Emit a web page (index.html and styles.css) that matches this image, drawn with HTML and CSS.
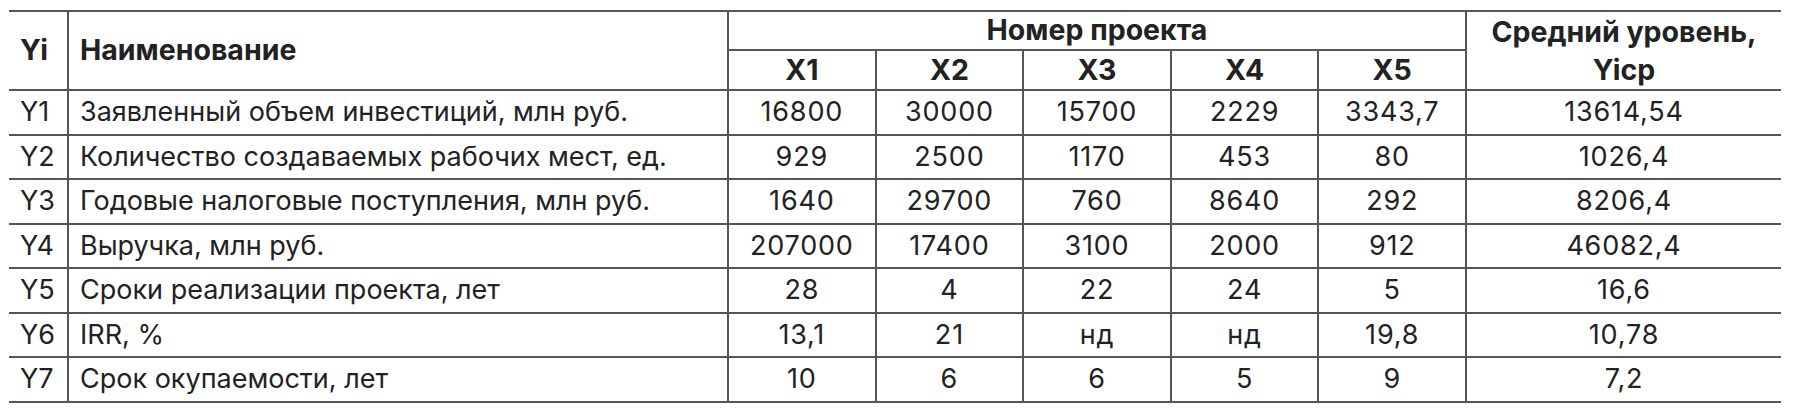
FILE: index.html
```html
<!DOCTYPE html>
<html lang="ru">
<head>
<meta charset="utf-8">
<link rel="stylesheet" href="styles.css">
</head>
<body>
<table class="tbl">
  <colgroup>
    <col class="c-yi">
    <col class="c-name">
    <col class="c-x">
    <col class="c-x">
    <col class="c-x">
    <col class="c-x">
    <col class="c-x">
    <col class="c-avg">
  </colgroup>
  <thead>
    <tr class="h1">
      <th rowspan="2" class="yi first">Yi</th>
      <th rowspan="2" class="name">Наименование</th>
      <th colspan="5" class="num">Номер проекта</th>
      <th rowspan="2" class="num last avg">Средний уровень,<br>Yicp</th>
    </tr>
    <tr class="h2">
      <th class="num">X1</th>
      <th class="num">X2</th>
      <th class="num">X3</th>
      <th class="num">X4</th>
      <th class="num">X5</th>
    </tr>
  </thead>
  <tbody>
    <tr><td class="yi first">Y1</td><td class="name">Заявленный объем инвестиций, млн руб.</td><td class="num">16800</td><td class="num">30000</td><td class="num">15700</td><td class="num">2229</td><td class="num">3343,7</td><td class="num last">13614,54</td></tr>
    <tr><td class="yi first">Y2</td><td class="name">Количество создаваемых рабочих мест, ед.</td><td class="num">929</td><td class="num">2500</td><td class="num">1170</td><td class="num">453</td><td class="num">80</td><td class="num last">1026,4</td></tr>
    <tr><td class="yi first">Y3</td><td class="name">Годовые налоговые поступления, млн руб.</td><td class="num">1640</td><td class="num">29700</td><td class="num">760</td><td class="num">8640</td><td class="num">292</td><td class="num last">8206,4</td></tr>
    <tr><td class="yi first">Y4</td><td class="name">Выручка, млн руб.</td><td class="num">207000</td><td class="num">17400</td><td class="num">3100</td><td class="num">2000</td><td class="num">912</td><td class="num last">46082,4</td></tr>
    <tr><td class="yi first">Y5</td><td class="name">Сроки реализации проекта, лет</td><td class="num">28</td><td class="num">4</td><td class="num">22</td><td class="num">24</td><td class="num">5</td><td class="num last">16,6</td></tr>
    <tr><td class="yi first">Y6</td><td class="name">IRR, %</td><td class="num">13,1</td><td class="num">21</td><td class="num">нд</td><td class="num">нд</td><td class="num">19,8</td><td class="num last">10,78</td></tr>
    <tr><td class="yi first">Y7</td><td class="name">Срок окупаемости, лет</td><td class="num">10</td><td class="num">6</td><td class="num">6</td><td class="num">5</td><td class="num">9</td><td class="num last">7,2</td></tr>
  </tbody>
</table>
</body>
</html>
```
FILE: styles.css
```css
html, body {
  margin: 0;
  padding: 0;
  background: #ffffff;
}

body {
  padding: 10px 0 0 9px;
  font-family: Inter, "Noto Sans", sans-serif;
  color: #222222;
}

.tbl {
  border-collapse: collapse;
  table-layout: fixed;
  width: 1772px;
  font-size: 27px;
  border-top: 2px solid #555;
  border-bottom: 2px solid #555;
}

.c-yi { width: 59px; }
.c-name { width: 660px; }
.c-x { width: 147.6px; }
.c-avg { width: 315px; }

.tbl th,
.tbl td {
  border: 2px solid #555;
  padding: 0;
  white-space: nowrap;
  overflow: hidden;
  line-height: 1.2;
}

.tbl th {
  font-weight: 700;
  font-size: 28.5px;
}

.tbl .first { border-left: none; }
.tbl .last { border-right: none; }

.h1 { height: 39px; }
.h2 { height: 40px; }
.tbl tbody tr { height: 44.5px; }

.yi {
  text-align: left;
  padding-left: 11px !important;
}

.name {
  text-align: left;
  padding-left: 11px !important;
}

.num {
  text-align: center;
}

.tbl td.num {
  letter-spacing: 0.8px;
}

.avg {
  line-height: 1.3 !important;
}
```
